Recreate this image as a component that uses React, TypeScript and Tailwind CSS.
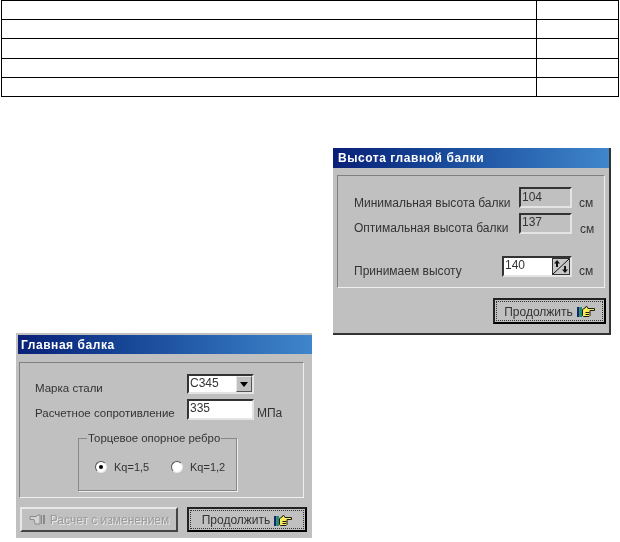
const sans = "font-['Liberation_Sans',Arial,sans-serif]";

function Hand({ disabled = false }: { disabled?: boolean }) {
  if (disabled) {
    return (
      <svg width="17" height="13" viewBox="0 0 17 13" className="shrink-0">
        <path d="M1 3.5h6l2-1.5h2v9H6L5 6.5H1z" fill="#d4d4d4" stroke="#8a8a8a" strokeWidth="1" />
        <path d="M12 2h1v9h-1zM14 2h2v9h-2z" fill="#8a8a8a" />
      </svg>
    );
  }
  return (
    <svg width="18" height="13" viewBox="0 0 18 13" className="shrink-0">
      <rect x="0" y="2" width="2.5" height="10" fill="#10296e" />
      <rect x="2.5" y="2" width="2.5" height="10" fill="#1d8f6a" />
      <path d="M5.5 4.5L8 3l1.5-2 1.5 2.5h6.5v2H13v5l-1 1H6.5l-1-1z" fill="#f7ea5c" stroke="#1d1d10" strokeWidth="1" />
      <path d="M8.5 7.5h4M8.5 9.5h3.5" stroke="#1d1d10" strokeWidth="1" />
    </svg>
  );
}

function Sunken({ className = "", children }: { className?: string; children?: React.ReactNode }) {
  return (
    <div className={`border-2 border-t-[#333] border-l-[#333] border-r-[#e4e4e4] border-b-[#e4e4e4] pl-[1px] text-[12px] leading-[14px] text-[#333] ${className}`}>
      {children}
    </div>
  );
}

function Continue({ className = "" }: { className?: string }) {
  return (
    <div className={`border-2 border-[#222] border-r-black border-b-black bg-[#c0c0c0] p-[1px] ${className}`}>
      <div className="flex h-full items-center justify-center gap-[4px] border border-dotted border-[#333] pt-[1px] text-[12px] text-[#333]">
        <span>Продолжить</span>
        <Hand />
      </div>
    </div>
  );
}

function Radio({ checked }: { checked?: boolean }) {
  return (
    <span className="flex size-[12px] shrink-0 items-center justify-center rounded-full border border-t-[#555] border-l-[#555] border-r-[#e8e8e8] border-b-[#e8e8e8] bg-white">
      {checked && <span className="size-[4px] rounded-full bg-black" />}
    </span>
  );
}

function Title({ children, className = "" }: { children: React.ReactNode; className?: string }) {
  return (
    <div className={`flex items-center bg-gradient-to-r from-[#0a1f78] to-[#3f86cc] text-[12px] font-bold tracking-[0.55px] text-white ${className}`}>
      {children}
    </div>
  );
}

function Row() {
  return (
    <div className="flex h-[19.2px] border-b-[1.5px] border-black">
      <div className="flex-1 border-r border-black" />
      <div className="w-[81px]" />
    </div>
  );
}

export default function App() {
  return (
    <div className={`relative h-[542px] w-[620px] overflow-hidden bg-white ${sans}`}>
      <div className="ml-[1px] mr-[1px] border-x-[1.5px] border-t-[1.5px] border-black">
        <Row /><Row /><Row /><Row /><Row />
      </div>

      <div className="absolute left-[333px] top-[148px] h-[187px] w-[278px] border-r-2 border-b-2 border-r-[#333] border-b-[#333] bg-[#c0c0c0] blur-[0.3px]">
        <Title className="h-[20px] pl-[5px]">Высота главной балки</Title>
        <div className="mx-[4px] mt-[7px] h-[113px] w-[268px] border border-t-[#808080] border-l-[#808080] border-r-[#f0f0f0] border-b-[#f0f0f0] pt-[11px] pl-[16px] text-[12px] leading-[14px] text-[#333]">
          <div className="flex h-[20px] items-start">
            <span className="mt-[9px] w-[165px]">Минимальная высота балки</span>
            <Sunken className="h-[21px] w-[53px] pt-[1px]">104</Sunken>
            <span className="ml-[7px] mt-[9px]">см</span>
          </div>
          <div className="mt-[6px] flex h-[20px] items-start">
            <span className="mt-[8px] w-[165px]">Оптимальная высота балки</span>
            <Sunken className="h-[21px] w-[53px]">137</Sunken>
            <span className="ml-[8px] mt-[9px]">см</span>
          </div>
          <div className="mt-[23px] flex h-[20px] items-start">
            <span className="mt-[8px] w-[148px]">Принимаем высоту</span>
            <Sunken className="flex h-[21px] w-[70px] justify-between bg-white pl-[1px]">
              <span>140</span>
              <svg width="18" height="17" viewBox="0 0 18 17" className="shrink-0 bg-[#c0c0c0]">
                <rect x="0.5" y="0.5" width="17" height="16" fill="#c8c8c8" stroke="#333" />
                <path d="M1 16L17 1" stroke="#111" strokeWidth="1" />
                <path d="M5 2l3 3.5H6V9H4V5.5H2zM13 15l3-3.5h-2V8h-2v3.5h-2z" fill="#111" />
              </svg>
            </Sunken>
            <span className="ml-[7px] mt-[8px]">см</span>
          </div>
        </div>
        <div className="mt-[10px] flex justify-end pr-[3px]">
          <Continue className="h-[26px] w-[113px]" />
        </div>
      </div>

      <div className="absolute left-[16px] top-[333px] h-[205px] w-[296px] bg-[#c0c0c0] pl-[2px] pt-[2px] blur-[0.3px]">
        <Title className="h-[19px] pl-[3px]">Главная балка</Title>
        <div className="ml-[1px] mt-[8px] h-[136px] w-[285px] border border-t-[#808080] border-l-[#808080] border-r-[#f0f0f0] border-b-[#f0f0f0] pt-[11px] pl-[15px] text-[11.5px] leading-[14px] text-[#333]">
          <div className="flex h-[20px] items-start">
            <span className="mt-[7px] w-[152px]">Марка стали</span>
            <Sunken className="flex h-[20px] w-[67px] justify-between bg-white">
              <span>С345</span>
              <span className="flex h-[16px] w-[16px] items-center justify-center border border-t-[#e8e8e8] border-l-[#e8e8e8] border-r-[#555] border-b-[#555] bg-[#c0c0c0]">
                <svg width="8" height="5" viewBox="0 0 8 5"><path d="M0 0h8L4 5z" fill="#000" /></svg>
              </span>
            </Sunken>
          </div>
          <div className="mt-[5px] flex h-[20px] items-start">
            <span className="mt-[7px] w-[152px]">Расчетное сопротивление</span>
            <Sunken className="h-[21px] w-[67px] bg-white">335</Sunken>
            <span className="ml-[3px] mt-[7px] text-[12px]">МПа</span>
          </div>
          <div className="relative ml-[43px] mt-[19px] h-[53px] w-[159px] border border-[#888] shadow-[1px_1px_0_#eee]">
            <span className="absolute -top-[8px] left-[8px] bg-[#c0c0c0] px-[1px] text-[11.4px]">Торцевое опорное ребро</span>
            <div className="flex pt-[21px] pl-[16px] text-[11px]">
              <div className="flex w-[76px] items-center gap-[7px]"><Radio checked /><span>Kq=1,5</span></div>
              <div className="flex items-center gap-[7px]"><Radio /><span>Kq=1,2</span></div>
            </div>
          </div>
        </div>
        <div className="mt-[9px] flex gap-[9px] pl-[2px]">
          <div className="flex h-[25px] w-[158px] items-center justify-center gap-[4px] border-2 border-t-[#e8e8e8] border-l-[#e8e8e8] border-r-[#444] border-b-[#444] text-[12px] text-[#999] [text-shadow:1px_1px_0_#e8e8e8]">
            <Hand disabled />
            <span>Расчет с изменением</span>
          </div>
          <Continue className="h-[25px] w-[120px]" />
        </div>
      </div>
    </div>
  );
}
